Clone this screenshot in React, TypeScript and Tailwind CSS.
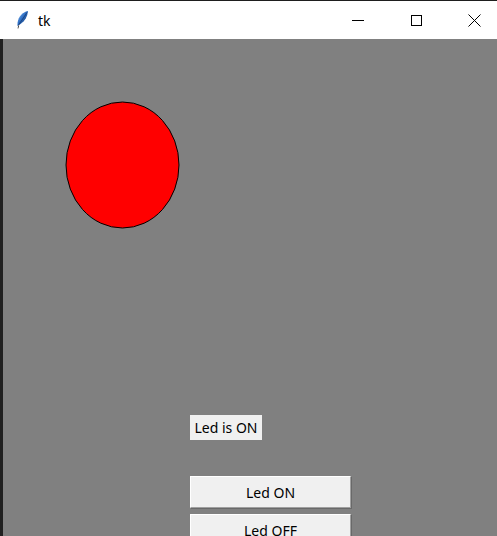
export default function App() {
  return (
    <div className="flex h-[536px] w-[497px] flex-col overflow-hidden bg-[#808080] font-['Noto_Sans',sans-serif]">
      {/* title bar */}
      <div className="h-px shrink-0 bg-[#1e1e1e]" />
      <div className="flex h-[38px] shrink-0 items-center bg-white">
        <svg width="14" height="20" viewBox="0 0 14 20" className="ml-[15px]">
          <defs>
            <linearGradient id="fth" x1="0" y1="0" x2="1" y2="1">
              <stop offset="0" stopColor="#8cc0f5" />
              <stop offset="0.45" stopColor="#2f6fc4" />
              <stop offset="1" stopColor="#0c2a5a" />
            </linearGradient>
          </defs>
          <path d="M13 1 C7.5 2 3.5 6.5 2.6 12.5 L2.4 16 L5.5 14 C10 11 12.5 6.5 13 1 Z" fill="url(#fth)" />
          <path d="M2.6 18.5 L3.2 15.2 L4.2 15.4 L3.4 18.6 Z" fill="#444" />
          <path d="M12 2.5 L3.6 15" stroke="#143a73" strokeWidth="0.8" />
        </svg>
        <span className="ml-[9px] text-[14px] text-black">tk</span>
        <div className="ml-auto flex h-full items-center">
          <div className="flex h-full w-[46px] items-center justify-center">
            <div className="h-px w-[12px] bg-black" />
          </div>
          <div className="ml-[12px] flex h-full w-[46px] items-center justify-center">
            <div className="h-[11px] w-[11px] border border-black" />
          </div>
          <div className="ml-[12px] flex h-full w-[46px] items-center justify-center">
            <svg width="13" height="13" viewBox="0 0 13 13">
              <path d="M0.5 0.5 L12.5 12.5 M12.5 0.5 L0.5 12.5" stroke="black" strokeWidth="1" />
            </svg>
          </div>
        </div>
      </div>

      {/* window body */}
      <div className="flex min-h-0 flex-1 overflow-hidden">
        <div className="w-[3px] shrink-0 bg-[#202020]" />
        <div className="flex flex-1 flex-col bg-[#808080]">
          <svg width="115" height="128" viewBox="0 0 115 128" className="ml-[62px] mt-[62px] shrink-0">
            <ellipse cx="57.5" cy="64" rx="56.5" ry="63" fill="#ff0000" stroke="#000" strokeWidth="1" />
          </svg>

          <div className="ml-[187px] mt-[186px] flex h-[25px] w-[72px] shrink-0 items-center justify-center bg-[#f0f0f0] text-[14px] text-black">
            Led is ON
          </div>

          <button className="ml-[187px] mt-[36px] h-[32px] w-[161px] shrink-0 border border-t-white border-l-white border-b-[#a0a0a0] border-r-[#a0a0a0] bg-[#f0f0f0] text-[14px] text-black shadow-[1px_1px_0_#696969]">
            Led ON
          </button>
          <button className="ml-[187px] mt-[6px] h-[32px] w-[161px] shrink-0 border border-t-white border-l-white border-b-[#a0a0a0] border-r-[#a0a0a0] bg-[#f0f0f0] text-[14px] text-black shadow-[1px_1px_0_#696969]">
            Led OFF
          </button>
        </div>
      </div>
    </div>
  );
}
